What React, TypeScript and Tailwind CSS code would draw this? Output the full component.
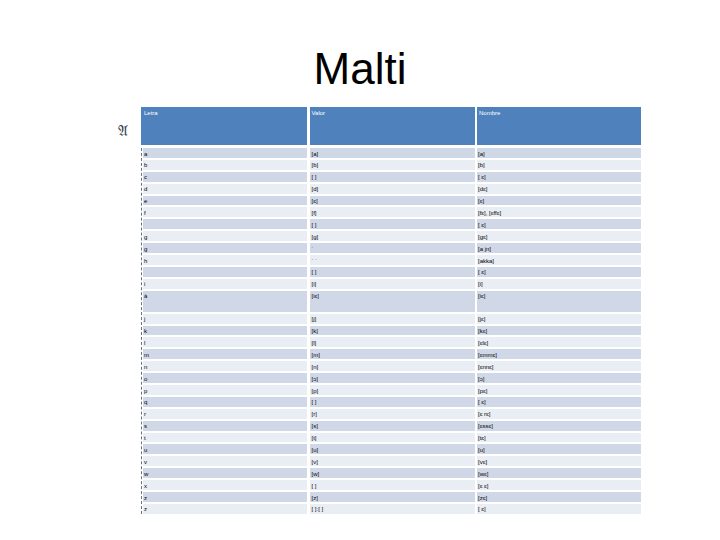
const rows: { l: string; v: string; n: string; tall?: boolean }[] = [
  { l: 'a', v: '[a]', n: '[a]' },
  { l: 'b', v: '[b]', n: '[b]' },
  { l: 'c', v: '[ ]', n: '[ ɛ]' },
  { l: 'd', v: '[d]', n: '[dɛ]' },
  { l: 'e', v: '[ɛ]', n: '[ɛ]' },
  { l: 'f', v: '[f]', n: '[fɛ], [ɛffɛ]' },
  { l: '', v: '[ ]', n: '[ ɛ]' },
  { l: 'g', v: '[g]', n: '[gɛ]' },
  { l: 'g', v: '˙', n: '[a jn]' },
  { l: 'h', v: '˙ ˙', n: '[akka]' },
  { l: '', v: '[ ]', n: '[ ɛ]' },
  { l: 'i', v: '[i]', n: '[i]' },
  { l: 'à', v: '[iɛ]', n: '[iɛ]', tall: true },
  { l: 'j', v: '[j]', n: '[jɛ]' },
  { l: 'k', v: '[k]', n: '[kɛ]' },
  { l: 'l', v: '[l]', n: '[ɛlɛ]' },
  { l: 'm', v: '[m]', n: '[ɛmmɛ]' },
  { l: 'n', v: '[n]', n: '[ɛnnɛ]' },
  { l: 'o', v: '[ɔ]', n: '[ɔ]' },
  { l: 'p', v: '[p]', n: '[pɛ]' },
  { l: 'q', v: '[ ]', n: '[ ɛ]' },
  { l: 'r', v: '[r]', n: '[ɛ rɛ]' },
  { l: 's', v: '[s]', n: '[ɛssɛ]' },
  { l: 't', v: '[t]', n: '[tɛ]' },
  { l: 'u', v: '[u]', n: '[u]' },
  { l: 'v', v: '[v]', n: '[vɛ]' },
  { l: 'w', v: '[w]', n: '[wɛ]' },
  { l: 'x', v: '[ ]', n: '[ɛ ɛ]' },
  { l: 'z', v: '[z]', n: '[zɛ]' },
  { l: 'z', v: '[ ]:[ ]', n: '[ ɛ]' },
]

export default function App() {
  return (
    <div className="w-[720px] h-[540px] bg-white font-['Liberation_Sans',Arial,sans-serif] overflow-hidden">
      <h1 className="pt-[47px] text-center text-[44px] leading-none text-black">Malti</h1>

      <div className="mt-[16px] flex">
        <div className="w-[141px] shrink-0 flex justify-end pr-[13px] pt-[17px]">
          <span className="text-[15px] leading-none text-gray-700 font-['DejaVu_Serif',serif]">𝔄</span>
        </div>

        <div className="w-[500px]">
          <div className="h-[38px] grid grid-cols-[166px_165px_164px] gap-x-[2.5px] text-[6px] text-white leading-none">
            <div className="bg-[#4f81bd] pl-[3px] pt-[3px]">Letra</div>
            <div className="bg-[#4f81bd] pl-[2px] pt-[3px]">Valor</div>
            <div className="bg-[#4f81bd] pl-[2px] pt-[3px]">Nombre</div>
          </div>

          <div className="mt-[3px] border-l border-dashed border-gray-500 flex flex-col gap-y-[2px] text-[6px] leading-none text-black">
            {rows.map((r, i) => (
              <div
                key={i}
                className={`ml-[1px] grid grid-cols-[164px_165px_164px] gap-x-[2.5px] ${r.tall ? 'h-[21px]' : 'h-[9.9px]'}`}
              >
                <div className={`${i % 2 === 0 ? 'bg-[#d0d8e8]' : 'bg-[#e9edf4]'} pl-[1px] pt-[2.5px]`}>{r.l}</div>
                <div className={`${i % 2 === 0 ? 'bg-[#d0d8e8]' : 'bg-[#e9edf4]'} pl-[2px] pt-[2.5px]`}>{r.v}</div>
                <div className={`${i % 2 === 0 ? 'bg-[#d0d8e8]' : 'bg-[#e9edf4]'} pl-[1px] pt-[2.5px]`}>{r.n}</div>
              </div>
            ))}
          </div>
        </div>
      </div>
    </div>
  )
}
